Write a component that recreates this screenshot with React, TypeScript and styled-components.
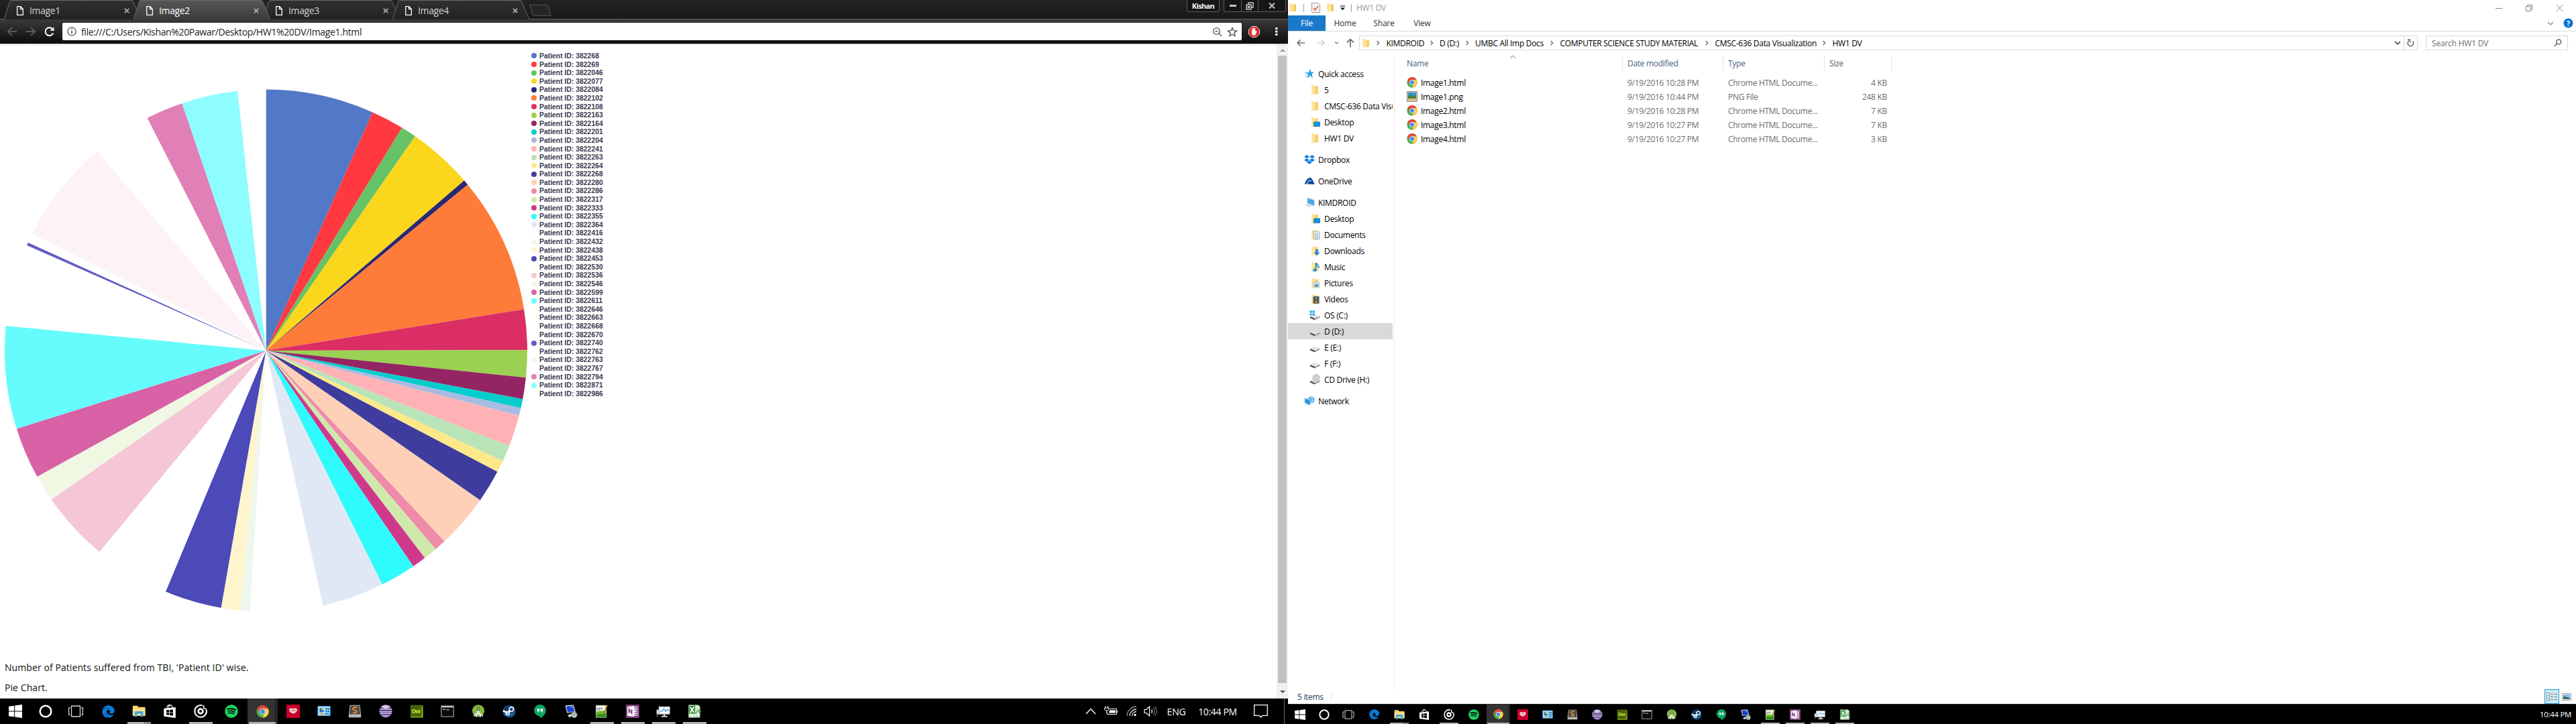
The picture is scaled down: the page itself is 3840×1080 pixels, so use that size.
import React from "react";
import styled, { createGlobalStyle, css } from "styled-components";
import { FaEdge, FaDropbox, FaSpotify } from "react-icons/fa";

const Global = createGlobalStyle`
  * { box-sizing: border-box; }
  body { margin: 0; background: #fff; }
  svg { display: block; flex: none; }
`;

const ui = `"Open Sans", "Noto Sans", sans-serif`;

/* ---------- desktop ---------- */

const Desktop = styled.div`
  display: flex;
  width: 3840px;
  height: 1080px;
  overflow: hidden;
  font-family: ${ui};
`;

const Monitor = styled.section`
  display: flex;
  flex-direction: column;
  width: 1920px;
  height: 1080px;
  background: #fff;
`;

const Label = styled.span<{ $size?: number; $track?: number; $color?: string }>`
  font-size: ${(p) => p.$size ?? 12}px;
  letter-spacing: ${(p) => p.$track ?? -0.3}px;
  color: ${(p) => p.$color ?? "#000"};
  white-space: pre;
`;

/* ---------- browser ---------- */

const TabStrip = styled.div`
  display: flex;
  height: 28px;
  padding-left: 6px;
  background: linear-gradient(#222, #191919);
`;

const TabBox = styled.div<{ $active?: boolean }>`
  position: relative;
  z-index: ${(p) => (p.$active ? 2 : 1)};
  display: flex;
  align-items: center;
  width: 204px;
  height: 29px;
  margin-right: -11px;
  padding: 2px 17px 0 19px;
  font-size: 14px;
  letter-spacing: -0.35px;
  color: ${(p) => (p.$active ? "#fff" : "#d0d0d0")};
`;

const TabShape = styled.svg`
  position: absolute;
  inset: 0;
`;

const TabTitle = styled.span`
  position: relative;
  flex: 1;
  margin-left: 9px;
  line-height: 20px;
`;

const TabIcon = styled.svg`
  position: relative;
`;

const NewTab = styled.svg`
  margin: 6px 0 0 9px;
`;

const WindowButtons = styled.div`
  display: flex;
  gap: 6px;
  margin-left: auto;
  padding-right: 3px;
`;

const ButtonGroup = styled.div<{ $w: number }>`
  display: flex;
  align-items: center;
  width: ${(p) => p.$w}px;
  height: 18px;
  border: 1px solid #5c5c5c;
  border-top: 0;
  border-radius: 0 0 4px 4px;
  background: #161616;
  color: #f2f2f2;
  font-size: 11px;
  font-weight: 700;
  letter-spacing: -0.65px;
  justify-content: center;
`;

const ButtonCell = styled.div<{ $w: number }>`
  display: flex;
  align-items: center;
  justify-content: center;
  width: ${(p) => p.$w}px;
  height: 17px;
  & + & { border-left: 1px solid #5c5c5c; }
`;

const Toolbar = styled.div`
  display: flex;
  align-items: center;
  height: 38px;
  padding-left: 8px;
  border-top: 1px solid #5e5e5e;
  border-bottom: 1px solid #a6a6a6;
  background: linear-gradient(#3a3a3a, #111 90%);
`;

const NavIcons = styled.div`
  display: flex;
  gap: 8px;
  width: 85px;
`;

const Omnibox = styled.div`
  display: flex;
  align-items: center;
  width: 1758px;
  height: 26px;
  padding: 0 6px 0 7px;
  border-radius: 2px;
  background: #fff;
`;

const Url = styled(Label)`
  flex: 1;
  margin-left: 7px;
`;

const OmniIcons = styled.div`
  display: flex;
  gap: 7px;
`;

const Extensions = styled.div`
  display: flex;
  gap: 23px;
  margin-left: 10px;
  align-items: center;
`;

const Viewport = styled.div`
  display: flex;
  flex: 1;
  min-height: 0;
`;

const Page = styled.main`
  flex: 1;
  background: #fff;
`;

const ChartRow = styled.div`
  display: flex;
  height: 920px;
`;

const Legend = styled.ul`
  list-style: none;
  margin: 11.2px 0 0 1px;
  padding: 0;
  font-family: "Liberation Sans", Arial, sans-serif;
`;

const LegendItem = styled.li`
  display: flex;
  align-items: center;
  height: 12.6px;
  gap: 4px;
  font-size: 10.4px;
  font-weight: 700;
  color: #3a3a50;
  white-space: pre;
`;

const Dot = styled.i<{ $c: string }>`
  width: 8px;
  height: 8px;
  border-radius: 50%;
  background: ${(p) => p.$c};
`;

const Caption = styled.p`
  margin: 0 0 10px 7px;
  font-size: 14px;
  line-height: 20px;
  letter-spacing: 0.08px;
  color: #111;
`;

const Scrollbar = styled.div`
  display: flex;
  flex-direction: column;
  align-items: center;
  width: 17px;
  padding: 6px 0;
  background: #f1f1f1;
`;

const Thumb = styled.div`
  width: 13px;
  height: 936px;
  margin: 5px 0 10px;
  background: #c1c1c1;
`;

/* ---------- taskbar ---------- */

const Bar = styled.footer<{ $small?: boolean }>`
  display: flex;
  height: ${(p) => (p.$small ? 30 : 38)}px;
  background: #000;
  ${(p) => p.$small && css`border-top: 1px solid #222;`}
`;

const SystemKeys = styled.div<{ $w: number; $gap: number }>`
  display: flex;
  margin-right: ${(p) => p.$gap}px;
  & > div { width: ${(p) => p.$w}px; }
`;

const Cell = styled.div<{ $w: number }>`
  display: flex;
  flex: none;
  position: relative;
  align-items: center;
  justify-content: center;
  width: ${(p) => p.$w}px;
`;

const Active = styled.div<{ $w: number; $strip: number }>`
  position: absolute;
  inset: 0 auto 0 1px;
  width: ${(p) => p.$w}px;
  background: #333;
  border-right: ${(p) => p.$strip}px solid #262626;
`;

const Running = styled.div<{ $w: number; $h: number; $tail?: number }>`
  position: absolute;
  bottom: 0;
  left: 50%;
  width: ${(p) => p.$w}px;
  height: ${(p) => p.$h}px;
  margin-left: ${(p) => -p.$w / 2}px;
  background: #b5b2ad;
  border-right: ${(p) => p.$tail ?? 0}px solid #8b8a88;
`;

const Front = styled.div`
  position: relative;
`;

const Tray = styled.div`
  display: flex;
  align-items: center;
  margin-left: auto;
  color: #fff;
`;

const TraySlot = styled.div<{ $w: number }>`
  display: flex;
  justify-content: center;
  width: ${(p) => p.$w}px;
`;

const Peek = styled.div`
  width: 6px;
  height: 38px;
  margin-left: 12px;
  border-left: 1px solid #666;
`;

const icons: Record<string, React.ReactNode> = {
  start: <g fill="#fff"><path d="M0 3.4 9.8 2v9.4H0zM11 1.8 24 0v11.4H11zM0 12.6h9.8V22L0 20.6zM11 12.6h13V24l-13-1.8z" /></g>,
  cortana: <circle cx="12" cy="12" r="10" fill="none" stroke="#fff" strokeWidth="3" />,
  view: <g fill="none" stroke="#fff" strokeWidth="1.4"><path d="M3.500 1.500h17v21h-17z" /><path d="M1.500 5H-1.800v14h3.300M22.500 5h3.300v14h-3.300" /></g>,
  explorer: <g><path d="M1 3.500C1 2.600 1.600 2 2.500 2h7l2 2.500H22c.8 0 1.300.5 1.300 1.300V20H1z" fill="#f9cd5a" /><path d="M1 7h22.300v13H1z" fill="#fee08a" /><path d="M3 3h4v1.500H3z" fill="#fff6" /><path d="M4.600 22v-8.400c0-1 .6-1.600 1.600-1.600h12c1 0 1.600.6 1.600 1.600V22h-4v-5.500H8.600V22z" fill="#3fa9dc" /></g>,
  store: <g><path d="M7 6.500C7 2 9.500.8 12 .8S17 2.500 17 6M10 5.500C10 2 12 1.500 13.500 1.500" fill="none" stroke="#fff" strokeWidth="1.4" /><path d="M1.500 7 22.500 4.800V24L1.500 21z" fill="#fff" /><path d="m6 10 5-.4v4.200H6zm6-.5 6-.6v4.900h-6zM6 14.800h5V19l-5-.6zm6 0h6v5l-6-.7z" fill="#000" /></g>,
  groove: <g fill="none" stroke="#fff"><path d="M15 1.700A10.600 10.600 0 1 0 22.300 9" strokeWidth="2.400" /><circle cx="12" cy="12" r="4" strokeWidth="3.200" /><path d="M17.500 1v5.500l5 2" strokeWidth="2" /></g>,
  chrome: <g><circle cx="12" cy="12" r="11.500" fill="#4caf50" /><path d="M12 12 2 6.200A11.500 11.500 0 0 1 22 6.300z" fill="#dd4b3e" /><path d="M12 12 7 3h5l10 3.300A11.500 11.500 0 0 1 11.500 23.500L17 14z" fill="#ffcd41" /><path d="M2 6.200A11.500 11.500 0 0 1 22 6.500H12L7 14.500z" fill="#dd4b3e" /><circle cx="12" cy="12" r="5.500" fill="#fff" /><circle cx="12" cy="12" r="4.400" fill="#4688f1" /></g>,
  iheart: (
    <g>
      <path d="M0 0h24v24H0z" fill="#c6002b" />
      <path d="M12 16.500C7.500 14 5 12.300 5 9.800 5 7.700 6.500 6.500 8.200 6.500c1.700 0 3 .7 3.800 1.800.8-1.100 2.100-1.800 3.800-1.800C17.500 6.500 19 7.700 19 9.800c0 2.500-2.500 4.200-7 6.700z" fill="#fff" />
      <path d="M7.500 8v4.500M9.500 8.500v4M14.500 8.500v4M16.500 8v4.500M12 12v5" stroke="#c6002b" strokeWidth=".8" />
      <circle cx="12" cy="10.500" r="1.100" fill="#c6002b" />
    </g>
  ),
  panel: <g><path d="M1 3h22v17H1z" fill="#a8def8" stroke="#3d9bd4" /><circle cx="8" cy="10" r="4.200" fill="#fff" /><path d="M8 5.800a4.200 4.200 0 1 0 4.200 4.200H8z" fill="#1577c8" /><path d="M8 5.800v4.200h4.200A4.200 4.200 0 0 0 8 5.800z" fill="#f7b43a" /><path d="M14.500 6h3v3h-3zM18.500 6h3v3h-3zM14.500 10.500h3v3h-3zM18.500 10.500h3v3h-3z" fill="#1779bd" /><path d="M4 16.500h8" stroke="#f19b27" strokeWidth="2" /><path d="M14 16.500h7" stroke="#1779bd" strokeWidth="2" /></g>,
  sublime: <g><path d="M3 1h18l2 18v4H1v-4z" fill="#b9b9b9" /><path d="M4 2h16l1.500 15.500H2.500z" fill="#474747" /><path d="M16 5.500C12 4 8.500 5 8.500 7.500c0 3.500 7 2 7 5 0 2.300-3.500 3.200-7.500 1.600" fill="none" stroke="#f6922d" strokeWidth="2.200" /></g>,
  eclipse: <g><circle cx="12" cy="12" r="11.500" fill="#6a4c94" /><path d="M3.500 4.500A11.500 11.500 0 0 1 20.500 4.500L12 8z" fill="#d6c7e8" /><path d="M1 8.500h22M.7 12h22.600M1.300 15.500h21.400" stroke="#e6def1" strokeWidth="1.500" /><path d="M2 9.500h20v1.700H2z" fill="#3b2465" /><path d="M4 19a11 11 0 0 0 16 0z" fill="#b7a2d6" /></g>,
  dw: <g><path d="M1 1h21v22H1z" fill="#59740b" /><path d="M2 2h17v18H2z" fill="#48600a" /><path d="m22 1 1.500 1.500V23.500H3L1 22h20z" fill="#8fae23" /><text x="3" y="15.500" fontSize="11" fontWeight="700" fontFamily="Open Sans, sans-serif" fill="#bde331" textLength="16">Dw</text></g>,
  cmd: <g><path d="M1 2.500h22v19H1z" fill="#0a0a0a" stroke="#a9b1b5" strokeWidth="1.300" /><path d="M1.500 3h21v2.200h-21z" fill="#d6dbde" /><path d="M3.500 8.500h2M6.500 8v2M8.500 8.500h1.500M11 9.500h4" stroke="#ddd" strokeWidth="1.500" /></g>,
  studio: <g><circle cx="12" cy="11" r="10.800" fill="#86b843" /><path d="M8 22.500 12 9l4 13.500M4 21c3-6 13-6 16 0" fill="none" stroke="#e9eee6" strokeWidth="2.200" /><circle cx="12" cy="8.500" r="3" fill="#4f7a35" /><circle cx="12" cy="8.500" r="1.200" fill="#dfe9d3" /><path d="M9.500 3.500 11 6M14.500 3.500 13 6" stroke="#456b2b" /></g>,
  steam: <g><circle cx="12" cy="12" r="11.500" fill="#143b68" /><path d="M1 14a11.500 11.500 0 0 0 22 0z" fill="#1c5f96" /><circle cx="16" cy="8.500" r="3.800" fill="none" stroke="#fff" strokeWidth="2" /><circle cx="9.500" cy="15.500" r="3" fill="none" stroke="#fff" strokeWidth="1.800" /><path d="m1 11 7.500 3.500L13.500 11" fill="none" stroke="#fff" strokeWidth="3" /></g>,
  hangouts: <g><path d="M12 0C6.200 0 1.500 4.600 1.500 10.400S6.200 20.600 12 20.600V24.500c6-3 10.500-8.300 10.500-14.100C22.500 4.600 17.800 0 12 0z" fill="#10a562" /><path d="M7 7.500h4v4.300L9.700 14H8.200l1-2.200H7zm6 0h4v4.300L15.700 14h-1.500l1-2.200H13z" fill="#fff" /></g>,
  remote: <g><path d="m2 1.500 14.500-1 4 12.500L5 15z" fill="#d9d9e6" /><path d="m4 3 11.500-1 3.200 10.200L6 13.500z" fill="#1a3fd0" /><path d="m8 2.600 7.500-.6 2 6z" fill="#4a7cf0" /><path d="m6 19 8-3 4 3-9 4z" fill="#c9c9d4" /><circle cx="18" cy="18.500" r="5" fill="#c3cdc6" stroke="#8b938d" /><path d="m15.500 20 4.500-3.500" stroke="#45953e" strokeWidth="1.500" /></g>,
  notepad: <g><path d="M2 1.500h18V23H2z" fill="#eef3ea" stroke="#c8cfc4" /><path d="M2.500 13c6-3 11 0 17-3v12.500h-17z" fill="#6cc22a" /><path d="M2.500 18c6-2 11 0 17-2v6.500h-17z" fill="#2f8f22" /><path d="M5 5.500v5M7 5.500c2 0 2 4.500 0 4.500M10.500 7h2.500M11.500 5.800v2.400" fill="none" stroke="#4a4a4a" strokeWidth="1.200" /><path d="m22.500 1.500-6 13-1.200 2.500.2-3 5.500-13z" fill="#eba31a" stroke="#8e5b0c" strokeWidth=".6" /></g>,
  onenote: <g><path d="M0 0h24v24H0z" fill="#7f3a7d" /><path d="M13 3.500h8v17h-8z" fill="#fff" /><path d="M15 6h4M15 10h4M15 14h4M15 18h4" stroke="#7f3a7d" strokeWidth="1.600" /><path d="M19.500 3.500v17" stroke="#7f3a7d" strokeWidth="1" /><path d="m2.500 4 11.500-1.700v19.400L2.500 20z" fill="#fff" /><path d="M5.500 16V8l5 8V8" fill="none" stroke="#7f3a7d" strokeWidth="1.900" /></g>,
  monitor: <g><path d="M4 4h19v13H4z" fill="#fff" stroke="#aeb8bd" strokeWidth="1.400" /><path d="m5.500 13 4-1.500 3-4 3.500 4.500 3-3 3 2" fill="none" stroke="#2f9bd1" strokeWidth="1.500" /><path d="M1 8v14M0 10h4v7H0z" stroke="#b9c1bd" fill="#dfe6df" /><path d="M12 17h3v3h-3zM9 20h9l1.500 2.500h-12z" fill="#c9ced1" /></g>,
  excel: <g><path d="M2 1h17l3 3v19H2z" fill="#e2efe0" stroke="#8ab58a" /><path d="M12 7h9v14h-9z" fill="#fff" stroke="#9fc49c" /><path d="M12 11h9M12 15h9M16.500 7v14" stroke="#9fc49c" /><path d="m2.500 3 11-1.500v15L2.500 16z" fill="#35903d" /><path d="m4.500 5 7 9M11.500 4.500l-7 10" stroke="#fff" strokeWidth="2.200" /><path d="M14 17c1-5 5-6 8-5M19 9l3.500 3-2.500 3.500" fill="none" stroke="#63b35e" strokeWidth="2" /></g>,
};

function AppIcon({ name, size }: { name: string; size: number }) {
  if (name === "edge") return <FaEdge size={size * 0.95} color="#0b7bd8" />;
  if (name === "spotify") return <FaSpotify size={size} color="#1ed760" />;
  return (
    <svg width={size} height={size} viewBox="0 0 24 24" overflow="visible">
      {icons[name]}
    </svg>
  );
}

const apps = ["edge", "explorer", "store", "groove", "spotify", "chrome", "iheart", "panel", "sublime", "eclipse", "dw", "cmd", "studio", "steam", "hangouts", "remote", "notepad", "onenote", "monitor", "excel"];
const running = ["explorer", "groove", "chrome", "notepad", "onenote", "monitor", "excel"];

function Taskbar({ small, children }: { small?: boolean; children: React.ReactNode }) {
  const cell = small ? 36.9 : 46;
  const size = small ? 16 : 20;
  const line = small ? 28 : 35;
  return (
    <Bar $small={small}>
      <SystemKeys $w={small ? 36 : 45} $gap={small ? 2.6 : 3}>
        {["start", "cortana", "view"].map((n) => (
          <Cell key={n} $w={cell}>
            <AppIcon name={n} size={n === "view" ? size - 2 : size} />
          </Cell>
        ))}
      </SystemKeys>
      {apps.map((n) => (
        <Cell key={n} $w={cell}>
          {n === "chrome" && <Active $w={small ? 35 : 45} $strip={small ? 3 : 5} />}
          {running.includes(n) && (
            <Running
              $w={n === "chrome" ? line + 5 : line}
              $h={small ? 2 : 3}
              $tail={n === "explorer" ? (small ? 9 : 11) : 0}
            />
          )}
          <Front>
            <AppIcon name={n} size={n === "chrome" ? size - 1 : size} />
          </Front>
        </Cell>
      ))}
      <Tray>{children}</Tray>
    </Bar>
  );
}

/* ---------- browser content ---------- */

const patients: [string, string, number][] = [
  ["382268", "#5179c7", 24.08],
  ["382269", "#ff393f", 31.38],
  ["3822046", "#66c266", 34.81],
  ["3822077", "#fad61d", 49.34],
  ["3822084", "#2a2870", 50.54],
  ["3822102", "#ff7b39", 80.89],
  ["3822108", "#db2e64", 89.9],
  ["3822163", "#9bd152", 95.93],
  ["3822164", "#942563", 100.71],
  ["3822201", "#06cccb", 102.72],
  ["3822204", "#a8bbe2", 104.43],
  ["3822241", "#ffb2b5", 111.42],
  ["3822263", "#b8e4b8", 115.04],
  ["3822264", "#fde98a", 117.66],
  ["3822268", "#3e3c9d", 124.98],
  ["3822280", "#ffd0b8", 136.94],
  ["3822286", "#ee8ba9", 139.5],
  ["3822317", "#cfe8ab", 142.56],
  ["3822333", "#d0398b", 145.69],
  ["3822355", "#2efbfc", 153.58],
  ["3822364", "#e0e7f5", 167.41],
  ["3822416", "#ffffff", 183.54],
  ["3822432", "#eef7ee", 185.66],
  ["3822438", "#fff5cc", 189.9],
  ["3822453", "#4b4ab8", 202.59],
  ["3822530", "#ffffff", 219.58],
  ["3822536", "#f5c6d5", 235.23],
  ["3822546", "#f0f7e3", 241.12],
  ["3822599", "#d961a5", 252.6],
  ["3822611", "#66fbfc", 275.44],
  ["3822646", "#ffffff", 280],
  ["3822663", "#ffffff", 284],
  ["3822668", "#ffffff", 288],
  ["3822670", "#ffffff", 293.78],
  ["3822740", "#615fc4", 294.45],
  ["3822762", "#ffffff", 296.58],
  ["3822763", "#fdf2f6", 319.83],
  ["3822767", "#ffffff", 332.98],
  ["3822794", "#e180b7", 341.27],
  ["3822871", "#8dfdff", 353.77],
  ["3822986", "#ffffff", 360],
];

function Pie() {
  const cx = 396.5, cy = 457, r = 389.5;
  const at = (deg: number) => {
    const a = (deg * Math.PI) / 180;
    return `${(cx + r * Math.sin(a)).toFixed(2)} ${(cy - r * Math.cos(a)).toFixed(2)}`;
  };
  return (
    <svg width="791" height="880" viewBox="0 0 791 880">
      {patients.map(([id, color, end], i) => (
        <path key={id} fill={color} d={`M${cx} ${cy}L${at(i ? patients[i - 1][2] : 0)}A${r} ${r} 0 0 1 ${at(end)}Z`} />
      ))}
    </svg>
  );
}

function Tab({ title, active }: { title: string; active?: boolean }) {
  return (
    <TabBox $active={active}>
      <TabShape width="204" height="29" viewBox="0 0 204 29">
        <defs>
          <linearGradient id={`fill-${title}`} x2="0" y2="1">
            <stop offset="0" stopColor={active ? "#565656" : "#313131"} />
            <stop offset="1" stopColor={active ? "#3c3c3c" : "#222"} />
          </linearGradient>
        </defs>
        <path d="M0 29 8.500 2.500Q9.200.5 11 .5H190Q192 .5 192.700 2.500L204 29" fill={`url(#fill-${title})`} stroke="#686868" />
      </TabShape>
      <TabIcon width="10" height="14" viewBox="0 0 10 14">
        <path d="M.7.7h5L9.300 4.500v8.800H.7zM5.500.7v4h4" fill="none" stroke="#fff" strokeWidth="1.300" />
      </TabIcon>
      <TabTitle>{title}</TabTitle>
      <TabIcon width="8" height="8" viewBox="0 0 8 8">
        <path d="m.8.8 6.400 6.400M7.200.8.8 7.200" stroke="#b0b0b0" strokeWidth="1.700" />
      </TabIcon>
    </TabBox>
  );
}

function Browser() {
  return (
    <Monitor>
      <TabStrip>
        <Tab title="Image1" />
        <Tab title="Image2" active />
        <Tab title="Image3" />
        <Tab title="Image4" />
        <NewTab width="36" height="19" viewBox="0 0 36 19">
          <path d="M2.500 1.500H28Q30 1.500 30.700 3.500L34 17.500H10Q7.500 17.500 7 15.500z" fill="#262626" stroke="#555" />
        </NewTab>
        <WindowButtons>
          <ButtonGroup $w={49}>Kishan</ButtonGroup>
          <ButtonGroup $w={93}>
            <ButtonCell $w={25}>
              <svg width="10" height="5"><path d="M0 1h10v3H0z" fill="#c4c4c4" /></svg>
            </ButtonCell>
            <ButtonCell $w={25}>
              <svg width="12" height="12" fill="none" stroke="#c4c4c4" strokeWidth="1.500"><path d="M1 4h7v7H1zM3.500 6.500h2v2h-2zM4 3.500V1h7v7H8.500" /></svg>
            </ButtonCell>
            <ButtonCell $w={41}>
              <svg width="10" height="9"><path d="m1 .5 8 8m0-8-8 8" stroke="#c4c4c4" strokeWidth="2" /></svg>
            </ButtonCell>
          </ButtonGroup>
        </WindowButtons>
      </TabStrip>
      <Toolbar>
        <NavIcons>
          <svg width="20" height="16" fill="none" stroke="#5b5b5b" strokeWidth="2"><path d="M17 8H4M10 2 4 8l6 6" /></svg>
          <svg width="20" height="16" fill="none" stroke="#5b5b5b" strokeWidth="2"><path d="M3 8h13M10 2l6 6-6 6" /></svg>
          <svg width="20" height="16" fill="none" stroke="#f4f4f4" strokeWidth="2.200"><path d="M15.200 10.500A6 6 0 1 1 14 4" /><path d="M16.500 1v6h-6z" fill="#f4f4f4" stroke="none" /></svg>
        </NavIcons>
        <Omnibox>
          <svg width="14" height="14" fill="none" stroke="#555"><circle cx="7" cy="7" r="6.200" strokeWidth="1.300" /><path d="M7 6v4.500M7 3.200v1.600" strokeWidth="1.500" /></svg>
          <Url $size={14} $track={-0.35} $color="#222">file:///C:/Users/Kishan%20Pawar/Desktop/HW1%20DV/Image1.html</Url>
          <OmniIcons>
            <svg width="15" height="15" fill="none" stroke="#555" strokeWidth="1.300"><circle cx="6.500" cy="6.500" r="4.800" /><path d="m10 10 4 4M4.500 6.500h4" /></svg>
            <svg width="16" height="15" fill="none" stroke="#555" strokeWidth="1.400"><path d="m8 1.500 1.800 4.200 4.700.4-3.600 3 1.200 4.600L8 11.200l-4.100 2.500 1.200-4.600-3.600-3 4.700-.4z" /></svg>
          </OmniIcons>
        </Omnibox>
        <Extensions>
          <svg width="17" height="17" viewBox="0 0 17 17"><path d="M5.200.5h6.600l4.700 4.700v6.600l-4.700 4.700H5.200L.5 11.800V5.200z" fill="#dc2b27" stroke="#f2d5d3" /><path d="M5 8V5l1.200-.4V3.500l1.300-.4.4-.8h1.200v1.200l1.200.3V8l1.400-.9.900.6-1.800 4.600c-.5 1-1.300 1.500-2.600 1.500C6 13.800 5 12.800 5 11z" fill="#fff" /></svg>
          <svg width="4" height="14"><path d="M0 1h3.500v3H0zM0 5.500h3.500v3H0zM0 10h3.500v3H0z" fill="#f2f2f2" /></svg>
        </Extensions>
      </Toolbar>
      <Viewport>
        <Page>
          <ChartRow>
            <Pie />
            <Legend>
              {patients.map(([id, color]) => (
                <LegendItem key={id}>
                  <Dot $c={color} />
                  Patient ID: {id}
                </LegendItem>
              ))}
            </Legend>
          </ChartRow>
          <Caption>Number of Patients suffered from TBI, 'Patient ID' wise.</Caption>
          <Caption>Pie Chart.</Caption>
        </Page>
        <Scrollbar>
          <svg width="8" height="6"><path d="M0 5 4 1l4 4z" fill="#999" /></svg>
          <Thumb />
          <svg width="8" height="6"><path d="m0 1 4 4 4-4z" fill="#505050" /></svg>
        </Scrollbar>
      </Viewport>
      <Taskbar>
        <TraySlot $w={20}>
          <svg width="16" height="10" fill="none" stroke="#fff" strokeWidth="1.400"><path d="m1 9 7-7.500L15 9" /></svg>
        </TraySlot>
        <TraySlot $w={39}>
          <svg width="20" height="16" fill="none" stroke="#fff"><path d="M8 4.500h10.500v8H4.500V10" /><path d="M8 6.500h9v4H7z" fill="#fff" stroke="none" /><path d="M19.500 7v3M2 0v3M5.500 0v3M.5 3h6.500v2.500L5 7H2.500L.5 5.500zM3.700 7v4" /></svg>
        </TraySlot>
        <TraySlot $w={24}>
          <svg width="16" height="16" fill="none" strokeWidth="1.300"><path d="M1 15A14 14 0 0 1 15 1" stroke="#999" /><path d="M5 15A10 10 0 0 1 15 5M8.500 15A6.500 6.500 0 0 1 15 8.500" stroke="#ddd" /><circle cx="13" cy="13.500" r="1.700" fill="#fff" /></svg>
        </TraySlot>
        <TraySlot $w={34}>
          <svg width="22" height="18" fill="none" stroke="#fff" strokeWidth="1.200"><path d="M1 6.500h3L8.500 2v14L4 11.500H1zM11.500 6.500a4 4 0 0 1 0 5" /><path d="M14 4a7 7 0 0 1 0 10M16.500 2a10 10 0 0 1 0 14" stroke="#777" /></svg>
        </TraySlot>
        <TraySlot $w={41}><Label $size={14} $track={-0.2} $color="#fff">ENG</Label></TraySlot>
        <TraySlot $w={82}><Label $size={14} $track={-0.35} $color="#fff">10:44 PM</Label></TraySlot>
        <TraySlot $w={46}>
          <svg width="21" height="20" fill="none" stroke="#fff" strokeWidth="1.300"><path d="M.7.7h19.600v15.600H13l-2.500 2.700L8 16.300H.7z" /></svg>
        </TraySlot>
        <Peek />
      </Taskbar>
    </Monitor>
  );
}

/* ---------- file explorer ---------- */

const TitleRow = styled.div`
  display: flex;
  align-items: center;
  height: 23px;
  padding: 0 19px 0 2px;
`;

const Sep = styled.i<{ $l: number; $r: number }>`
  width: 1px;
  height: 12px;
  margin: 0 ${(p) => p.$r}px 0 ${(p) => p.$l}px;
  background: #9a9a9a;
`;

const Properties = styled.svg`
  margin-right: 10px;
`;

const Controls = styled.div<{ $gap: number }>`
  display: flex;
  align-items: center;
  gap: ${(p) => p.$gap}px;
  margin-left: auto;
`;

const Ribbon = styled.div`
  display: flex;
  align-items: center;
  height: 24px;
  padding-right: 4px;
  border-bottom: 1px solid #dadbdc;
`;

const RibbonTab = styled.div<{ $w: number; $primary?: boolean }>`
  display: flex;
  align-items: center;
  justify-content: center;
  width: ${(p) => p.$w}px;
  height: 23px;
  font-size: 12px;
  letter-spacing: -0.2px;
  color: ${(p) => (p.$primary ? "#fff" : "#333")};
  background: ${(p) => (p.$primary ? "#1979ca" : "transparent")};
`;

const AddressRow = styled.div`
  display: flex;
  align-items: center;
  height: 34px;
  padding: 0 12px 0 12px;
`;

const ArrowGroup = styled.div`
  display: flex;
  align-items: center;
  width: 94px;
`;

const Address = styled.div`
  display: flex;
  align-items: center;
  width: 1578px;
  height: 22px;
  padding-left: 4px;
  border: 1px solid #d9d9d9;
`;

const Crumb = styled.div<{ $w: number }>`
  display: flex;
  align-items: center;
  gap: 9.5px;
  width: ${(p) => p.$w}px;
`;

const Refresh = styled.div`
  display: flex;
  align-items: center;
  justify-content: center;
  width: 20px;
  height: 20px;
  margin-left: 4px;
  border-left: 1px solid #d9d9d9;
`;

const Search = styled.div`
  display: flex;
  align-items: center;
  justify-content: space-between;
  width: 212px;
  height: 22px;
  margin-left: 12px;
  padding: 0 8px;
  border: 1px solid #d9d9d9;
`;

const Body = styled.div`
  display: flex;
  height: 947px;
`;

const Sidebar = styled.nav`
  width: 159px;
  padding-top: 17px;
  border-right: 1px solid #ececec;
`;

const Group = styled.div`
  margin-bottom: 8px;
`;

const SideRow = styled.div<{ $depth: number; $selected?: boolean }>`
  display: flex;
  align-items: center;
  gap: ${(p) => (p.$depth ? 6 : 5)}px;
  width: 156px;
  height: 24px;
  padding-left: ${(p) => (p.$depth ? 32 : 24)}px;
  overflow: hidden;
  background: ${(p) => (p.$selected ? "#d9d9d9" : "transparent")};
`;

const Files = styled.div`
  position: relative;
  width: 742px;
  padding-top: 1px;
`;

const columns = "340px 150px 151px 100px";

const HeadRow = styled.div`
  display: grid;
  grid-template-columns: ${columns};
  height: 25px;
  margin-bottom: 5px;
`;

const Head = styled.div<{ $first?: boolean }>`
  display: flex;
  align-items: center;
  padding-left: ${(p) => (p.$first ? 18 : 7)}px;
  border-right: 1px solid #e5e5e5;
`;

const SortMark = styled.svg`
  position: absolute;
  top: 1px;
  left: 171px;
`;

const FileRow = styled.div`
  display: grid;
  grid-template-columns: ${columns};
  align-items: center;
  height: 21px;
`;

const NameCell = styled.div`
  display: flex;
  align-items: center;
  gap: 5px;
  padding-left: 18px;
`;

const Meta = styled.div<{ $right?: boolean }>`
  padding: 0 7px;
  line-height: 20px;
  text-align: ${(p) => (p.$right ? "right" : "left")};
`;

const Status = styled.div`
  display: flex;
  align-items: center;
  height: 22px;
  padding: 0 7px 0 14px;
`;

const StatusSep = styled.i`
  width: 1px;
  height: 11px;
  margin-left: 11px;
  background: #e3e3e3;
`;

const ViewModes = styled.div`
  display: flex;
  align-items: center;
  gap: 4px;
  margin-left: auto;
`;

const ModeOn = styled.div`
  display: flex;
  align-items: center;
  justify-content: center;
  width: 22px;
  height: 22px;
  border: 1px solid #26a0da;
  background: #cbe8f6;
`;

const Folder = ({ children }: { children?: React.ReactNode }) => (
  <svg width="16" height="16" viewBox="0 0 16 16">
    <path d="M3 1.500h3l1 1h6v12H3z" fill="#f6d06f" />
    <path d="M3 2l5 1v12.500L3 14z" fill="#ffe79b" />
    {children}
  </svg>
);

const SmallFolder = () => (
  <svg width="11" height="13" viewBox="0 0 11 13">
    <path d="M0 .5h3l1 1h6v10.500H0z" fill="#f3cd6c" />
    <path d="M0 1l6 1v10.500L0 12z" fill="#ffe497" />
  </svg>
);

const Drive = ({ children }: { children?: React.ReactNode }) => (
  <svg width="16" height="16" viewBox="0 0 16 16">
    <path d="m1 10 6-3 8.500 2.500L8 13z" fill="#e2e2e2" />
    <path d="M1 10v2.500L8 15.500V13z" fill="#4c4c4c" />
    <path d="M8 13v2.500l7.500-3.500V9.500z" fill="#a6a6a6" />
    {children}
  </svg>
);

const sideIcons: Record<string, React.ReactNode> = {
  star: <svg width="16" height="16"><path d="m9 1 1.500 4.500H15l-3.500 3L13 14l-4-3-4.500 3.500L6 9 2 6h5z" fill="#2f9fe0" /><path d="M1 9h3M2 12h3M1 6h2" stroke="#7cc6f0" /></svg>,
  folder: <Folder />,
  desktop: <Folder><path d="M6.500 8h9v6.500h-9z" fill="#1594e4" stroke="#0d70b5" strokeWidth=".8" /></Folder>,
  docs: <Folder><path d="M6.500 3h7l1 1v11h-8z" fill="#fff" stroke="#888" strokeWidth=".8" /><path d="M8 6h5M8 8.500h5M8 11h5M8 13h5" stroke="#5b9bcf" /></Folder>,
  down: <Folder><path d="M9 6h4v4.500h2.500L11 15.500 6.500 10.500H9z" fill="#2e86d6" /></Folder>,
  music: <Folder><path d="M9.500 2v9.500M10 2c0 3 5 4 4 8" fill="none" stroke="#0f93e8" strokeWidth="1.800" /><ellipse cx="8" cy="13" rx="2.800" ry="2" fill="#0f93e8" /></Folder>,
  pics: <Folder><path d="M6 7h9v8H6z" fill="#fff" stroke="#9aa5ad" strokeWidth=".8" /><path d="M7.500 9h6v4.500h-6z" fill="#6db1de" /><path d="M7.500 13.500 10 11l3.500 2.500z" fill="#457a45" /></Folder>,
  video: <Folder><path d="M5.500 4h9v11h-9z" fill="#3a3a3a" /><path d="M8 4.500h4v4.500H8z" fill="#5a82b4" /><path d="M8 10h4v4.500H8z" fill="#a98a4c" /><path d="M6.500 4v11M13.500 4v11" stroke="#ccc" strokeDasharray="1 1.500" /></Folder>,
  dropbox: <FaDropbox size={16} color="#0c7fe5" />,
  onedrive: <svg width="16" height="16"><path d="M.5 12.500 4 6l3-2.500L10 3l3 4 2.500 6z" fill="#0b48a0" /><path d="m4 13 3.500-6L11 8" fill="none" stroke="#fff" strokeWidth="1" /></svg>,
  pc: <svg width="16" height="16"><path d="m5 1.500 10 3V13L5 9z" fill="#45a7e6" stroke="#9cc7e2" /><path d="m1 11.500 5-1.500 6 3-5 2z" fill="#d5dade" /></svg>,
  os: <Drive><path d="M.5 1.500h3v3h-3zM4.500 1.500h3.300v3H4.500zM.5 5.500h3v3h-3zM4.500 5.500h3.300v3H4.500z" fill="#14a8e8" /></Drive>,
  drive: <Drive />,
  cd: <Drive><circle cx="10" cy="5.500" r="5" fill="#d3d6d6" stroke="#9b9b9b" strokeWidth=".7" /><circle cx="10" cy="5.500" r="1.500" fill="#fff" stroke="#999" strokeWidth=".6" /></Drive>,
  net: <svg width="16" height="16"><circle cx="10.500" cy="6.500" r="5.200" fill="#66b8e6" /><path d="M10 2c2 2 4 5 1 9" fill="none" stroke="#d6eefa" /><path d="m1 4 8 3v7.500L1 11z" fill="#2d92d6" stroke="#9fd1ee" /></svg>,
};

type Entry = [string, string, number];
const tree: Entry[][] = [
  [["star", "Quick access", 0], ["folder", "5", 1], ["folder", "CMSC-636 Data Visualization", 1], ["desktop", "Desktop", 1], ["folder", "HW1 DV", 1]],
  [["dropbox", "Dropbox", 0]],
  [["onedrive", "OneDrive", 0]],
  [["pc", "KIMDROID", 0], ["desktop", "Desktop", 1], ["docs", "Documents", 1], ["down", "Downloads", 1], ["music", "Music", 1], ["pics", "Pictures", 1], ["video", "Videos", 1], ["os", "OS (C:)", 1], ["drive", "D (D:)", 1], ["drive", "E (E:)", 1], ["drive", "F (F:)", 1], ["cd", "CD Drive (H:)", 1]],
  [["net", "Network", 0]],
];

const files = [
  ["Image1.html", "9/19/2016 10:28 PM", "Chrome HTML Docume...", "4 KB"],
  ["Image1.png", "9/19/2016 10:44 PM", "PNG File", "248 KB"],
  ["Image2.html", "9/19/2016 10:28 PM", "Chrome HTML Docume...", "7 KB"],
  ["Image3.html", "9/19/2016 10:27 PM", "Chrome HTML Docume...", "7 KB"],
  ["Image4.html", "9/19/2016 10:27 PM", "Chrome HTML Docume...", "3 KB"],
];

const crumbs: [string, number][] = [
  ["KIMDROID", 79.5], ["D (D:)", 53], ["UMBC All Imp Docs", 126.5], ["COMPUTER SCIENCE STUDY MATERIAL", 231], ["CMSC-636 Data Visualization", 175], ["HW1 DV", 70],
];

const Chevron = () => (
  <svg width="5" height="8" fill="none" stroke="#666" strokeWidth="1.300"><path d="m.7 1 3 3-3 3" /></svg>
);

function Explorer() {
  return (
    <Monitor>
      <TitleRow>
        <SmallFolder />
        <Sep $l={10} $r={11} />
        <Properties width="13" height="15" viewBox="0 0 13 15"><path d="M.5.5h9.500l2.500 2.500v11.500H.5z" fill="#f4f4f4" stroke="#999" /><path d="m3 8 2.500 3L10 5" fill="none" stroke="#e8662a" strokeWidth="1.800" /></Properties>
        <SmallFolder />
        <svg width="25" height="10"><path d="M9 2h7" stroke="#000" strokeWidth="1" /><path d="M9 4.500h7L12.500 8z" /></svg>
        <Sep $l={0} $r={7} />
        <Label $color="#999">HW1 DV</Label>
        <Controls $gap={35}>
          <svg width="10" height="10"><path d="M0 5.500h10" stroke="#888" /></svg>
          <svg width="10" height="10" fill="none" stroke="#888"><path d="M.5 2.500h7v7h-7zM2.500 2.500v-2h7v7h-2" /></svg>
          <svg width="11" height="10"><path d="m.5 0 10 10m0-10-10 10" stroke="#888" /></svg>
        </Controls>
      </TitleRow>
      <Ribbon>
        <RibbonTab $w={56} $primary>File</RibbonTab>
        <RibbonTab $w={58}>Home</RibbonTab>
        <RibbonTab $w={58}>Share</RibbonTab>
        <RibbonTab $w={56}>View</RibbonTab>
        <Controls $gap={14}>
          <svg width="10" height="6" fill="none" stroke="#888" strokeWidth="1.200"><path d="m1 1 4 4 4-4" /></svg>
          <svg width="15" height="15"><circle cx="7.500" cy="7.500" r="7" fill="#0a6fd0" /><text x="7.500" y="11.500" textAnchor="middle" fontSize="11" fontWeight="700" fill="#fff">?</text></svg>
        </Controls>
      </Ribbon>
      <AddressRow>
        <ArrowGroup>
          <svg width="94" height="16" fill="none">
            <path d="M13 8H2M6.500 3.500 2 8l4.500 4.500" stroke="#6d6d6d" strokeWidth="1.600" />
            <path d="M31 8h11M37.500 3.500 42 8l-4.500 4.500" stroke="#cfcfcf" strokeWidth="1.600" />
            <path d="m58 6.500 2.500 2.500L63 6.500" stroke="#888" strokeWidth="1.300" />
            <path d="M81 14.500V3M76 7.500 81 2.500l5 5" stroke="#777" strokeWidth="1.800" />
          </svg>
        </ArrowGroup>
        <Address>
          <Crumb $w={21}><SmallFolder /></Crumb>
          {crumbs.map(([name, w]) => (
            <Crumb key={name} $w={w}>
              <Chevron />
              <Label>{name}</Label>
            </Crumb>
          ))}
          <Controls $gap={0}>
            <svg width="10" height="7" fill="none" stroke="#666" strokeWidth="1.800"><path d="m1 1 4 4 4-4" /></svg>
            <Refresh>
              <svg width="11" height="12" fill="none" stroke="#666" strokeWidth="1.500"><path d="M8.500 3.300A4.300 4.300 0 1 1 3 2.800M1 1.200h3.500v4" /></svg>
            </Refresh>
          </Controls>
        </Address>
        <Search>
          <Label $color="#6d6d6d" $track={-0.2}>Search HW1 DV</Label>
          <svg width="12" height="12" fill="none" stroke="#666" strokeWidth="1.600"><circle cx="7.300" cy="4.500" r="3.500" /><path d="M4.700 7 .8 11" /></svg>
        </Search>
      </AddressRow>
      <Body>
        <Sidebar>
          {tree.map((group) => (
            <Group key={group[0][1]}>
              {group.map(([icon, name, depth]) => (
                <SideRow key={name} $depth={depth} $selected={name === "D (D:)"}>
                  {sideIcons[icon]}
                  <Label>{name}</Label>
                </SideRow>
              ))}
            </Group>
          ))}
        </Sidebar>
        <Files>
          <HeadRow>
            {["Name", "Date modified", "Type", "Size"].map((h, i) => (
              <Head key={h} $first={i === 0}><Label $color="#4c607a">{h}</Label></Head>
            ))}
          </HeadRow>
          <SortMark width="10" height="6" fill="none" stroke="#777"><path d="m1 5 4-4 4 4" /></SortMark>
          {files.map(([name, date, type, size]) => (
            <FileRow key={name}>
              <NameCell>
                {name.endsWith("png") ? (
                  <svg width="16" height="16"><path d="M.5.5h15v15H.5z" fill="#d9c08c" stroke="#8f8f8f" /><path d="M2 2h12v9H2z" fill="#2d94d3" /><path d="M2 11V8l4-3 3 3 3-2 2 2v3z" fill="#48802f" /></svg>
                ) : (
                  <AppIcon name="chrome" size={16} />
                )}
                <Label>{name}</Label>
              </NameCell>
              <Meta><Label $color="#6d6d6d">{date}</Label></Meta>
              <Meta><Label $color="#6d6d6d">{type}</Label></Meta>
              <Meta $right><Label $color="#6d6d6d">{size}</Label></Meta>
            </FileRow>
          ))}
        </Files>
      </Body>
      <Status>
        <Label $color="#1e395b">5 items</Label>
        <StatusSep />
        <ViewModes>
          <ModeOn>
            <svg width="16" height="13" fill="none"><path d="M.5.5h4v4h-4zM.5 4.500h4v4h-4zM.5 8.500h4v4h-4z" fill="#fff" stroke="#999" /><path d="M6 2.500h4M12 2.500h4M6 6.500h4M12 6.500h4M6 10.500h4M12 10.500h4" stroke="#777" /><path d="M2 2.500h1M2 6.500h1" stroke="#2a7" /><path d="M2 10.500h1" stroke="#c33" /></svg>
          </ModeOn>
          <svg width="14" height="11"><path d="M.5.5h13v10H.5z" fill="#fff" stroke="#999" /><path d="M2 2h10v7H2z" fill="#7db4ec" /><path d="M2 5c4 0 5 2 10 2v2H2z" fill="#35634e" /></svg>
        </ViewModes>
      </Status>
      <Taskbar small>
        <TraySlot $w={61}><Label $size={11.5} $track={-0.3} $color="#fff">10:44 PM</Label></TraySlot>
      </Taskbar>
    </Monitor>
  );
}

export default function App() {
  return (
    <Desktop>
      <Global />
      <Browser />
      <Explorer />
    </Desktop>
  );
}
